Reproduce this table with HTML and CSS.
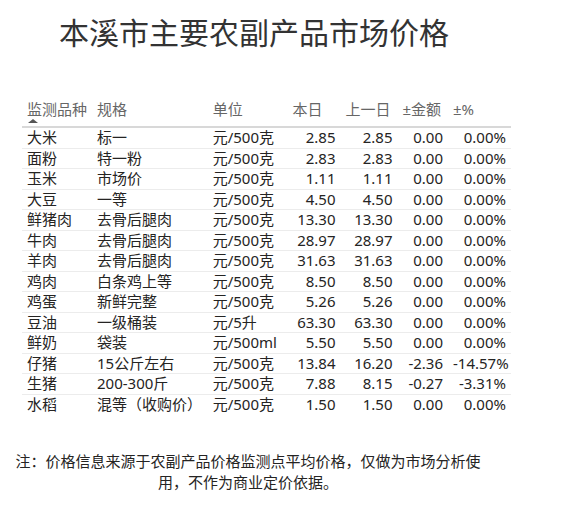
FILE: index.html
```html
<!DOCTYPE html>
<html lang="zh-CN">
<head>
<meta charset="utf-8">
<title>本溪市主要农副产品市场价格</title>
<link rel="stylesheet" href="styles.css">
</head>
<body>
<div class="page">
  <h1 class="title">本溪市主要农副产品市场价格</h1>
  <table class="prices">
    <colgroup>
      <col class="c1"><col class="c2"><col class="c3"><col class="c4"><col class="c5"><col class="c6"><col class="c7">
    </colgroup>
    <thead>
      <tr>
        <th><span class="hlabel">监测品种</span><span class="sort"></span></th>
        <th><span class="hlabel">规格</span></th>
        <th><span class="hlabel">单位</span></th>
        <th><span class="hlabel">本日</span></th>
        <th><span class="hlabel">上一日</span></th>
        <th><span class="hlabel">±金额</span></th>
        <th><span class="hlabel">±%</span></th>
      </tr>
    </thead>
    <tbody>
      <tr><td>大米</td><td>标一</td><td>元/500克</td><td class="num">2.85</td><td class="num">2.85</td><td class="num">0.00</td><td class="num">0.00%</td></tr>
      <tr><td>面粉</td><td>特一粉</td><td>元/500克</td><td class="num">2.83</td><td class="num">2.83</td><td class="num">0.00</td><td class="num">0.00%</td></tr>
      <tr><td>玉米</td><td>市场价</td><td>元/500克</td><td class="num">1.11</td><td class="num">1.11</td><td class="num">0.00</td><td class="num">0.00%</td></tr>
      <tr><td>大豆</td><td>一等</td><td>元/500克</td><td class="num">4.50</td><td class="num">4.50</td><td class="num">0.00</td><td class="num">0.00%</td></tr>
      <tr><td>鲜猪肉</td><td>去骨后腿肉</td><td>元/500克</td><td class="num">13.30</td><td class="num">13.30</td><td class="num">0.00</td><td class="num">0.00%</td></tr>
      <tr><td>牛肉</td><td>去骨后腿肉</td><td>元/500克</td><td class="num">28.97</td><td class="num">28.97</td><td class="num">0.00</td><td class="num">0.00%</td></tr>
      <tr><td>羊肉</td><td>去骨后腿肉</td><td>元/500克</td><td class="num">31.63</td><td class="num">31.63</td><td class="num">0.00</td><td class="num">0.00%</td></tr>
      <tr><td>鸡肉</td><td>白条鸡上等</td><td>元/500克</td><td class="num">8.50</td><td class="num">8.50</td><td class="num">0.00</td><td class="num">0.00%</td></tr>
      <tr><td>鸡蛋</td><td>新鲜完整</td><td>元/500克</td><td class="num">5.26</td><td class="num">5.26</td><td class="num">0.00</td><td class="num">0.00%</td></tr>
      <tr><td>豆油</td><td>一级桶装</td><td>元/5升</td><td class="num">63.30</td><td class="num">63.30</td><td class="num">0.00</td><td class="num">0.00%</td></tr>
      <tr><td>鲜奶</td><td>袋装</td><td>元/500ml</td><td class="num">5.50</td><td class="num">5.50</td><td class="num">0.00</td><td class="num">0.00%</td></tr>
      <tr><td>仔猪</td><td>15公斤左右</td><td>元/500克</td><td class="num">13.84</td><td class="num">16.20</td><td class="num">-2.36</td><td class="num">-14.57%</td></tr>
      <tr><td>生猪</td><td>200-300斤</td><td>元/500克</td><td class="num">7.88</td><td class="num">8.15</td><td class="num">-0.27</td><td class="num">-3.31%</td></tr>
      <tr class="last"><td>水稻</td><td>混等（收购价）</td><td>元/500克</td><td class="num">1.50</td><td class="num">1.50</td><td class="num">0.00</td><td class="num">0.00%</td></tr>
    </tbody>
  </table>
  <p class="note">注：价格信息来源于农副产品价格监测点平均价格，仅做为市场分析使用，不作为商业定价依据。</p>
</div>
</body>
</html>
```

FILE: styles.css
```css
html, body {
  margin: 0;
  padding: 0;
  background: #ffffff;
}

body {
  font-family: "Segoe UI", "Noto Sans", "Noto Sans CJK SC", sans-serif;
  color: #252423;
}

.page {
  padding: 8px;
}

.title {
  margin: 3px 0 0 51px;
  font-family: "Noto Sans CJK SC", sans-serif;
  font-weight: 400;
  font-size: 30px;
  line-height: 40px;
  color: #333333;
  letter-spacing: 0;
}

.prices {
  margin: 48px 0 0 14px;
  width: 489px;
  border-collapse: separate;
  border-spacing: 0;
  table-layout: fixed;
  font-size: 15px;
}

.c1 { width: 70px; }
.c2 { width: 115.7px; }
.c3 { width: 79.8px; }
.c4 { width: 53px; }
.c5 { width: 57px; }
.c6 { width: 50.5px; }
.c7 { width: 63px; }

.prices th {
  padding: 0 5px;
  height: 27px;
  vertical-align: top;
  text-align: left;
  font-weight: 400;
  color: #666666;
  border-bottom: 2px solid #d8d8d8;
  white-space: nowrap;
}

.hlabel {
  display: block;
  line-height: 20px;
}

.sort {
  display: block;
  width: 0;
  height: 0;
  margin: 0 0 0 1px;
  border-left: 5px solid transparent;
  border-right: 5px solid transparent;
  border-bottom: 4px solid #555555;
}

.prices td {
  padding: 0 5px;
  height: 19.5px;
  line-height: 19.5px;
  border-bottom: 1px solid #ececec;
  white-space: nowrap;
  overflow: visible;
}

.prices tr.last td {
  border-bottom: none;
}

.prices td.num {
  text-align: right;
}

.note {
  margin: 37px 0 0 5px;
  width: 470px;
  text-align: center;
  font-size: 15px;
  line-height: 21px;
  color: #252423;
}
```
